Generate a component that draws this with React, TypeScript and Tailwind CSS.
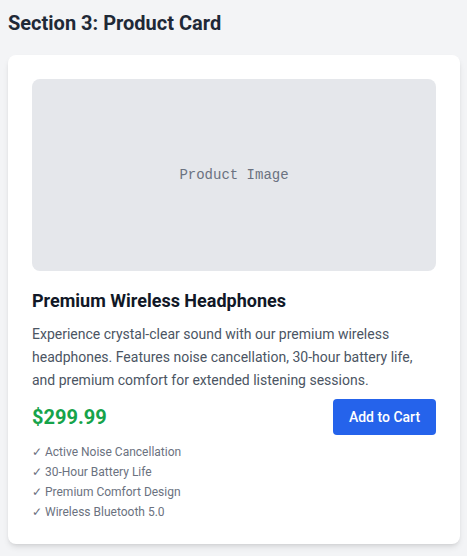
import React from "react";

const features = [
  "Active Noise Cancellation",
  "30-Hour Battery Life",
  "Premium Comfort Design",
  "Wireless Bluetooth 5.0",
];

export default function App() {
  return (
    <div className="min-h-[556px] bg-[#f3f4f6] pl-2 pr-[7px] pt-[9px] pb-3 font-['Roboto',sans-serif]">
      <h2 className="mb-[18px] text-xl font-bold leading-7 text-[#1f2937]">Section 3: Product Card</h2>
      <div className="rounded-lg bg-white px-6 pt-6 pb-6 shadow-md">
        <div className="flex h-48 items-center justify-center rounded-lg bg-[#e5e7eb]">
          <span className="font-['Liberation_Mono',monospace] text-sm text-[#6b7280]">Product Image</span>
        </div>
        <h3 className="mt-4 text-lg font-bold leading-7 text-[#111827]">Premium Wireless Headphones</h3>
        <p className="mt-2 text-sm leading-[23px] text-[#4b5563]">
          Experience crystal-clear sound with our premium wireless headphones. Features noise cancellation, 30-hour battery life, and premium comfort for extended listening sessions.
        </p>
        <div className="mt-[7px] flex items-center justify-between">
          <span className="text-xl font-bold text-[#16a34a]">$299.99</span>
          <button className="h-9 w-[103px] rounded bg-[#2563eb] text-sm font-medium text-white">Add to Cart</button>
        </div>
        <ul className="mt-[9px] flex flex-col gap-1 text-xs text-[#6b7280]">
          {features.map((f) => (
            <li key={f} className="leading-4">✓ {f}</li>
          ))}
        </ul>
      </div>
    </div>
  );
}
